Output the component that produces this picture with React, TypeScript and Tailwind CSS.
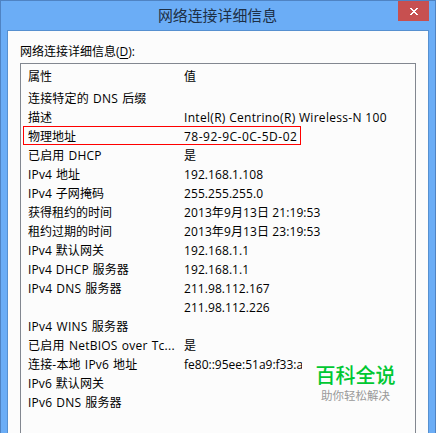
import clsx from "clsx"

// ── Connection Data ───────────────────────────────────────────────────────────

type DetailRow = {
  label: string
  value?: string
  marked?: boolean
  labelSpacing?: string
  valueSpacing?: string
}

const DETAILS: DetailRow[] = [
  { label: "连接特定的 DNS 后缀", labelSpacing: "tracking-[0.16px] [word-spacing:1px]" },
  { label: "描述", value: "Intel(R) Centrino(R) Wireless-N 100", valueSpacing: "tracking-[0.31px]" },
  { label: "物理地址", value: "78-92-9C-0C-5D-02", marked: true, valueSpacing: "tracking-[0.5px]" },
  { label: "已启用 DHCP", value: "是", labelSpacing: "tracking-[0.16px] [word-spacing:0.8px]" },
  { label: "IPv4 地址", value: "192.168.1.108", labelSpacing: "tracking-[0.16px] [word-spacing:0.6px]", valueSpacing: "tracking-[0.08px]" },
  { label: "IPv4 子网掩码", value: "255.255.255.0", labelSpacing: "tracking-[0.12px] [word-spacing:0.6px]", valueSpacing: "tracking-[0.08px]" },
  { label: "获得租约的时间", value: "2013年9月13日 21:19:53", valueSpacing: "tracking-[0.1px]" },
  { label: "租约过期的时间", value: "2013年9月13日 23:19:53", valueSpacing: "tracking-[0.1px]" },
  { label: "IPv4 默认网关", value: "192.168.1.1", labelSpacing: "tracking-[0.12px] [word-spacing:0.6px]", valueSpacing: "tracking-[0.08px]" },
  { label: "IPv4 DHCP 服务器", value: "192.168.1.1", labelSpacing: "tracking-[0.14px] [word-spacing:0.6px]", valueSpacing: "tracking-[0.08px]" },
  { label: "IPv4 DNS 服务器", value: "211.98.112.167", labelSpacing: "tracking-[0.2px] [word-spacing:0.7px]", valueSpacing: "tracking-[0.06px]" },
  { label: "", value: "211.98.112.226", valueSpacing: "tracking-[0.06px]" },
  { label: "IPv4 WINS 服务器", labelSpacing: "tracking-[0.27px] [word-spacing:0.7px]" },
  { label: "已启用 NetBIOS over Tc...", value: "是", labelSpacing: "tracking-[0.24px] [word-spacing:0.8px]" },
  { label: "连接-本地 IPv6 地址", value: "fe80::95ee:51a9:f33:a", labelSpacing: "tracking-[0.18px] [word-spacing:0.8px]" },
  { label: "IPv6 默认网关", labelSpacing: "tracking-[0.12px] [word-spacing:0.6px]" },
  { label: "IPv6 DNS 服务器", labelSpacing: "tracking-[0.2px] [word-spacing:0.7px]" },
]

// ── Window Parts ──────────────────────────────────────────────────────────────

function TitleBar() {
  return (
    <div className="relative h-[29px] shrink-0 text-center">
      <h1 className="pr-px text-[14.9px] leading-[29px] text-[#1d2f45]">网络连接详细信息</h1>
      <button
        aria-label="关闭"
        className="absolute top-0 right-[6px] flex h-[20px] w-[31px] items-center justify-center bg-[#c75050]"
      >
        <svg width="8" height="7" viewBox="0 0 8 7" shapeRendering="crispEdges" fill="#fff">
          <path d="M0 0h2v1h1v1h2v-1h1v-1h2v1h-1v1h-1v1h-1v1h1v1h1v1h1v1h-2v-1h-1v-1h-2v1h-1v1h-2v-1h1v-1h1v-1h1v-1h-1v-1h-1v-1h-1z" />
        </svg>
      </button>
    </div>
  )
}

function Watermark() {
  return (
    <div className="absolute top-[299px] left-[281px] w-[107px] bg-[#fcfcfc] text-center">
      <p className="text-[20px] leading-[26px] font-medium text-[#00c832]">百科全说</p>
      <p className="text-[11.5px] leading-[14px] text-[#999]">助你轻松解决</p>
    </div>
  )
}

export default function App() {
  return (
    <div className="flex h-[433px] w-[436px] flex-col overflow-hidden border border-b-0 border-[#4f83c3] bg-[#6badf6] font-['Open_Sans','Noto_Sans_CJK_SC',sans-serif] text-[12px] text-black">
      <TitleBar />
      <div className="mx-[6px] flex flex-1 flex-col border border-b-0 border-[#5690d0] bg-[#fcfcfc] px-[12px]">
        <p className="h-[32px] shrink-0 pt-[12px] leading-[17px]">
          网络连接详细信息(<span className="underline underline-offset-2">D</span>):
        </p>

        <div className="relative flex-1 border border-b-0 border-[#828790] px-[2px]">
          {/* Column headings */}
          <div className="flex h-[24px] pl-[5px] leading-[26px]">
            <span className="w-[156px]">属性</span>
            <span>值</span>
          </div>

          {DETAILS.map((row, i) => (
            <div
              key={i}
              className={clsx(
                "flex h-[19px] w-[278px] border pl-[4px] leading-[19px] whitespace-pre",
                row.marked ? "border-[#f00]" : "border-transparent",
              )}
            >
              <span className={clsx("w-[156px] shrink-0", row.labelSpacing)}>{row.label}</span>
              <span className={row.valueSpacing}>{row.value}</span>
            </div>
          ))}

          <Watermark />
        </div>
      </div>
    </div>
  )
}
